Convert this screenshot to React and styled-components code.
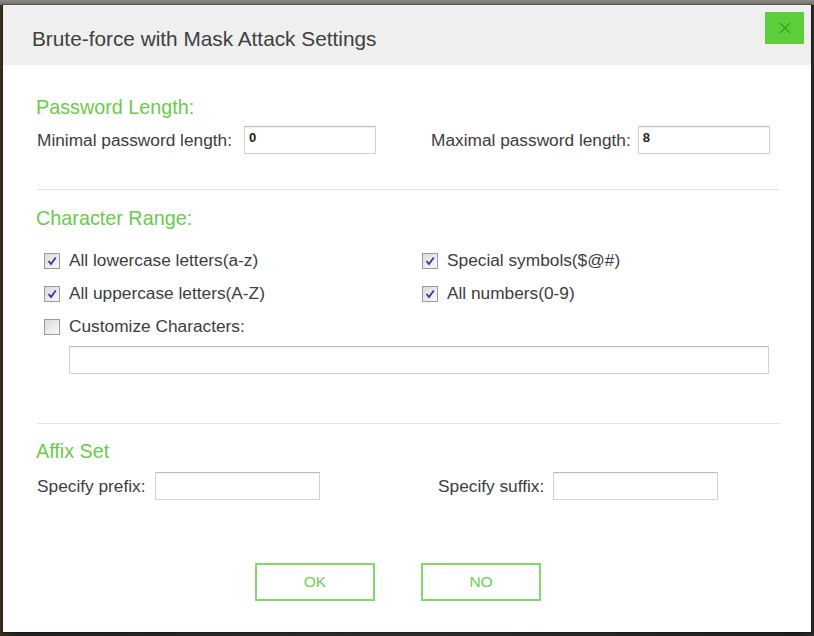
import React from "react";
import styled, { createGlobalStyle } from "styled-components";

const Global = createGlobalStyle`
  html, body { margin: 0; padding: 0; }
  body {
    width: 814px;
    height: 636px;
    overflow: hidden;
    font-family: "Liberation Sans", Arial, sans-serif;
    background: linear-gradient(90deg, #3a2e1c 0%, #1d231c 2%, #2a2f2a 50%, #1c2020 98%, #2b2b26 100%);
  }
`;

const Screen = styled.div`
  width: 814px;
  height: 636px;
  padding: 5px 3px 4px 3px;
  box-sizing: border-box;
  background: linear-gradient(180deg, #8d8a84 0px, #6f6c66 5px, transparent 5px);
`;

const Dialog = styled.div`
  height: 100%;
  background: #fff;
  display: flex;
  flex-direction: column;
  box-shadow: 0 0 0 1px rgba(0, 0, 0, 0.25);
`;

const Header = styled.div`
  height: 60px;
  flex-shrink: 0;
  background: #efefef;
  display: flex;
  align-items: center;
  justify-content: space-between;
  padding: 0 7px 0 29px;
  box-sizing: border-box;
`;

const Title = styled.h1`
  margin: 7px 0 0 0;
  font-size: 20.8px;
  font-weight: normal;
  color: #404040;
`;

const CloseButton = styled.button`
  align-self: flex-start;
  margin-top: 7px;
  width: 39px;
  height: 32px;
  border: none;
  padding: 0;
  background: #5cce3a;
  display: flex;
  align-items: center;
  justify-content: center;
  cursor: pointer;
`;

const Body = styled.div`
  flex: 1;
  padding: 31px 31px 0 34px;
  display: flex;
  flex-direction: column;
`;

const SectionTitle = styled.h2`
  margin: ${(p) => p.$top || 0}px 0 0 -1px;
  font-size: 19.8px;
  line-height: 22px;
  font-weight: normal;
  color: #6acb4a;
`;

const Row = styled.div`
  display: flex;
  align-items: ${(p) => p.$align || "center"};
  margin-top: ${(p) => p.$top || 0}px;
`;

const Half = styled.div`
  width: ${(p) => (p.$left ? "385px" : "auto")};
  flex: ${(p) => (p.$left ? "none" : "1")};
  display: flex;
  align-items: center;
  padding-left: ${(p) => p.$indent || 0}px;
  box-sizing: border-box;
`;

const Label = styled.span`
  font-size: 17.3px;
  color: #3d3d3d;
  margin-right: ${(p) => p.$gap || 10}px;
  white-space: nowrap;
`;

const Input = styled.input`
  width: ${(p) => p.$w}px;
  height: 28px;
  box-sizing: border-box;
  border: 1px solid #d2d2d2;
  border-top-color: #bdbdbd;
  box-shadow: inset 0 1px 1px rgba(0, 0, 0, 0.06);
  padding: 0 4px 5px;
  font-family: "Liberation Sans", Arial, sans-serif;
  font-size: 13px;
  font-weight: bold;
  color: #222;
  margin-left: ${(p) => p.$ml || 0}px;
  outline: none;
  line-height: 1;
`;

const Divider = styled.hr`
  border: none;
  height: 1px;
  background: #e4e4e4;
  margin: ${(p) => p.$top}px 0 0 0;
`;

const CheckRow = styled.label`
  display: flex;
  align-items: center;
  height: 33px;
  font-size: 17.3px;
  color: #3d3d3d;
`;

const Box = styled.span`
  width: 14px;
  height: 14px;
  border: 1px solid #9a9b9c;
  background: linear-gradient(135deg, #dadada, #fafafa);
  margin-right: 9px;
  display: flex;
  align-items: center;
  justify-content: center;
  flex-shrink: 0;
`;

const CheckColumn = styled.div`
  display: flex;
  flex-direction: column;
  padding-left: ${(p) => p.$indent || 0}px;
`;

const Footer = styled.div`
  display: flex;
  justify-content: center;
  gap: 46px;
  margin-top: 63px;
  padding-right: 21px;
`;

const ActionButton = styled.button`
  width: 120px;
  height: 38px;
  background: #fff;
  border: 2px solid #80d96a;
  color: #6fcd52;
  font-family: "Liberation Sans", Arial, sans-serif;
  font-size: 15.5px;
  cursor: pointer;
`;

const Check = ({ checked, children }) => (
  <CheckRow>
    <Box>
      {checked && (
        <svg width="12" height="12" viewBox="0 0 12 12">
          <path d="M2.5 6 L5 9 L9.8 2.5" fill="none" stroke="#2c3f9c" strokeWidth="1.8" />
        </svg>
      )}
    </Box>
    {children}
  </CheckRow>
);

export default function App() {
  return (
    <>
      <Global />
      <Screen>
        <Dialog>
          <Header>
            <Title>Brute-force with Mask Attack Settings</Title>
            <CloseButton aria-label="close">
              <svg width="14" height="14" viewBox="0 0 14 14">
                <path d="M2 2 L12 12 M12 2 L2 12" stroke="#3b9a2c" strokeWidth="1.3" />
              </svg>
            </CloseButton>
          </Header>
          <Body>
            <SectionTitle>Password Length:</SectionTitle>
            <Row $top={8}>
              <Half $left>
                <Label $gap={12}>Minimal password length:</Label>
                <Input $w={132} defaultValue="0" />
              </Half>
              <Half $indent={9}>
                <Label $gap={7}>Maximal password length:</Label>
                <Input $w={132} defaultValue="8" />
              </Half>
            </Row>
            <Divider $top={35} />
            <SectionTitle $top={17}>Character Range:</SectionTitle>
            <Row $top={15} $align="flex-start">
              <Half $left>
                <CheckColumn $indent={7}>
                  <Check checked>All lowercase letters(a-z)</Check>
                  <Check checked>All uppercase letters(A-Z)</Check>
                  <Check>Customize Characters:</Check>
                </CheckColumn>
              </Half>
              <Half>
                <CheckColumn>
                  <Check checked>Special symbols($@#)</Check>
                  <Check checked>All numbers(0-9)</Check>
                </CheckColumn>
              </Half>
            </Row>
            <Row $top={3}>
              <Input $w={700} $ml={32} />
            </Row>
            <Divider $top={49} />
            <SectionTitle $top={16}>Affix Set</SectionTitle>
            <Row $top={10}>
              <Half $left>
                <Label $gap={9}>Specify prefix:</Label>
                <Input $w={165} />
              </Half>
              <Half $indent={16}>
                <Label $gap={9}>Specify suffix:</Label>
                <Input $w={165} />
              </Half>
            </Row>
            <Footer>
              <ActionButton>OK</ActionButton>
              <ActionButton>NO</ActionButton>
            </Footer>
          </Body>
        </Dialog>
      </Screen>
    </>
  );
}
